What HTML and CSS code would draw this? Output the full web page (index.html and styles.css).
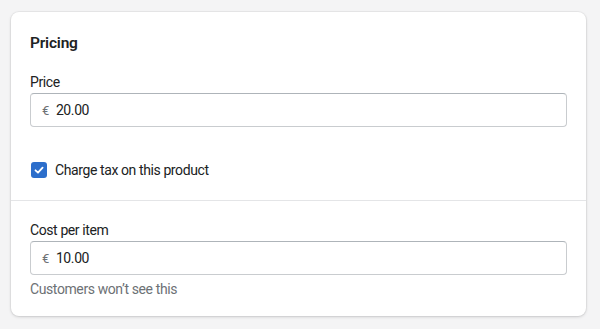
FILE: index.html
```html
<!DOCTYPE html>
<html lang="en">
<head>
<meta charset="utf-8">
<title>Pricing</title>
<link rel="stylesheet" href="styles.css">
</head>
<body>
  <div class="card">
    <section class="section">
      <h2 class="title">Pricing</h2>
      <div class="field">
        <label class="label" for="price">Price</label>
        <div class="input">
          <span class="prefix">€</span>
          <span class="value" id="price">20.00</span>
        </div>
      </div>
      <label class="check">
        <span class="box">
          <svg width="16" height="16" viewBox="0 0 16 16" aria-hidden="true">
            <path d="M4.5 8.3 L7 10.7 L11.6 5.6" fill="none" stroke="#fff" stroke-width="1.8" stroke-linecap="round" stroke-linejoin="round"/>
          </svg>
        </span>
        <span class="check-text">Charge tax on this product</span>
      </label>
    </section>
    <section class="section section-second">
      <div class="field">
        <label class="label" for="cost">Cost per item</label>
        <div class="input">
          <span class="prefix">€</span>
          <span class="value" id="cost">10.00</span>
        </div>
        <p class="help">Customers won’t see this</p>
      </div>
    </section>
  </div>
</body>
</html>
```
FILE: styles.css
```css
* { box-sizing: border-box; }
html, body { margin: 0; padding: 0; }
body {
  background: #f4f4f5;
  font-family: "Roboto", "Open Sans", sans-serif;
  font-size: 14px;
  letter-spacing: -0.4px;
  color: #202223;
  padding: 12px 14px 13px 11px;
}
.card {
  background: #fff;
  border-radius: 8px;
  box-shadow: 0 0 0 1px rgba(63,63,68,0.05), 0 1px 3px rgba(63,63,68,0.2);
  height: 304px;
}
.section {
  padding: 21px 19px 20px 19px;
}
.section-second {
  border-top: 1px solid #e4e5e7;
  padding-top: 19px;
}
.title {
  margin: 0 0 19px;
  font-size: 15.5px;
  font-weight: 600;
  line-height: 20px;
  letter-spacing: -0.2px;
}
.field { display: flex; flex-direction: column; }
.label {
  line-height: 20px;
  margin-bottom: 1px;
}
.input {
  display: flex;
  align-items: center;
  height: 34px;
  border: 1px solid #c9cccf;
  border-top-color: #aeb4b9;
  border-radius: 4px;
  padding: 0 11px;
}
.prefix { color: #6d7175; margin-right: 7px; font-size: 13px; }
.value { line-height: 20px; }
.check {
  display: flex;
  align-items: center;
  gap: 8px;
  margin-top: 33px;
  line-height: 20px;
}
.box {
  width: 16px;
  height: 16px;
  border-radius: 3px;
  background: #2c6ecb;
  display: flex;
  margin-left: 1px;
}
.help {
  margin: 4px 0 0;
  color: #6d7175;
  line-height: 20px;
}
```
